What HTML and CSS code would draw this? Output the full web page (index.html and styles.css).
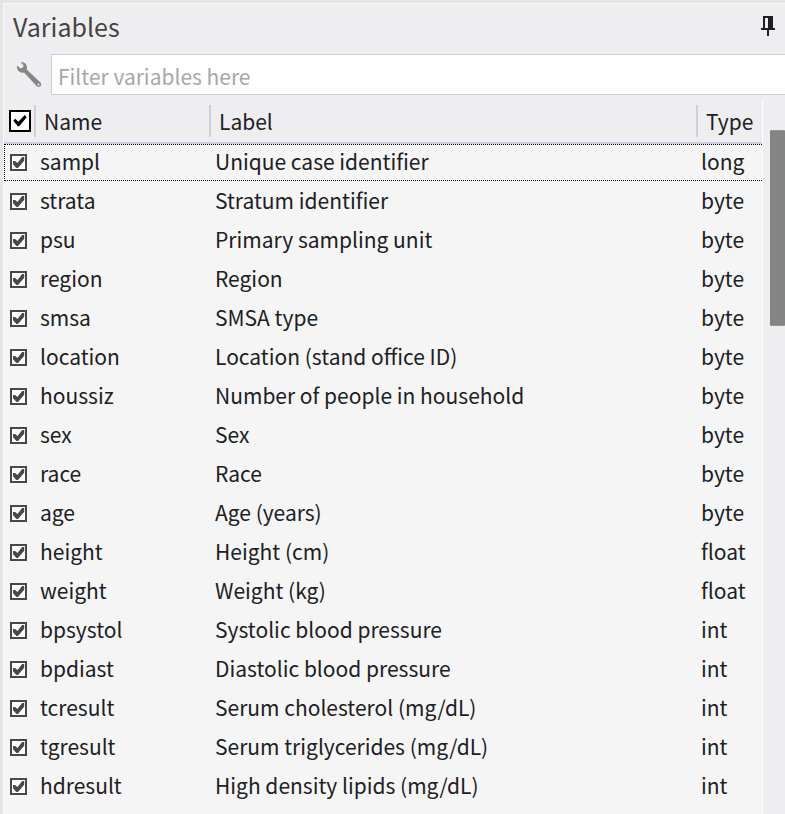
FILE: index.html
```html
<!DOCTYPE html>
<html lang="en">
<head>
  <meta charset="UTF-8">
  <meta name="viewport" content="width=device-width, initial-scale=1.0">
  <title>Variables</title>
  <link rel="stylesheet" href="styles.css">
</head>
<body>
  <section class="panel">
    <header class="titlebar">
      <h1 class="title">Variables</h1>
      <button type="button" class="pin" aria-label="Pin panel">
        <svg width="14" height="20" viewBox="0 0 14 20">
          <path d="M2 0h10v12h2v2H8v6H6v-6H0v-2h2zM4 2v10h3V2z" fill="#1e1e24" fill-rule="evenodd"/>
        </svg>
      </button>
    </header>

    <div class="filter">
      <button type="button" class="tools" aria-label="Filter options">
        <svg width="26" height="26" viewBox="0 0 26 26">
          <path d="M1 3.500L4.500 6.500L7 5.500L7.500 3L4.500 0.500C8 -0.300 11 2 11 5.500L10.700 7.500L24.500 20.500C26.500 23.500 23.500 26 20.800 24.300L8 10.500C4.500 11.500 0.200 8.500 1 3.500Z" fill="#858786"/>
          <circle cx="22.500" cy="22.500" r="1" fill="#eeeef0"/>
        </svg>
      </button>
      <input type="text" class="filter-input" placeholder="Filter variables here" aria-label="Filter variables">
    </div>

    <div class="list">
      <table class="variables">
        <thead>
          <tr>
            <th><input type="checkbox" class="check check-all" id="checkAll" aria-label="Select all variables" checked></th>
            <th>Name</th>
            <th>Label</th>
            <th>Type</th>
          </tr>
        </thead>
        <tbody id="rows"></tbody>
      </table>
      <div class="scrollbar"><div class="thumb"></div></div>
    </div>
  </section>

  <script src="script.js"></script>
</body>
</html>
```

FILE: styles.css
```css
* {
  box-sizing: border-box;
}
body {
  margin: 0;
  font-family: "Noto Sans CJK SC", "Noto Sans", sans-serif;
  font-size: 21px;
  line-height: 32px;
  color: #202024;
  background-color: #e4e4e4;
}
.panel {
  display: flex;
  flex-direction: column;
  min-height: 100vh;
  border-top: 3px solid #e4e4e4;
  border-left: 3px solid #e4e4e4;
  background-color: #eeeef0;
  box-shadow: inset 1px 1px #fafafa;
}
.titlebar {
  display: flex;
  justify-content: space-between;
  align-items: center;
  height: 51px;
  padding: 0 10px 5px;
}
.title {
  margin: 0;
  font-size: 25px;
  font-weight: normal;
  color: #444;
}
.pin, .tools {
  display: flex;
  padding: 0;
  border: none;
  background: none;
  cursor: pointer;
}
.filter {
  display: flex;
  align-items: center;
  padding-left: 13px;
}
.filter-input {
  flex: 1;
  min-width: 0;
  height: 41px;
  margin-left: 9px;
  padding: 2px 6px 0;
  border: 1px solid #c9cdda;
  border-right: none;
  font: inherit;
  color: inherit;
  background-color: #fff;
}
.filter-input::placeholder {
  color: #a6a8a9;
  opacity: 1;
}
.list {
  display: flex;
  flex: 1;
  align-items: stretch;
  padding-top: 5px;
  padding-left: 1px;
}

/* Table of variables */
.variables {
  display: block;
  flex: 1;
  border-right: 1px solid #fff;
  background-color: #f5f5f5;
}
.variables thead {
  display: block;
}
.variables tbody {
  display: grid;
  gap: 2px;
}
.variables tr {
  display: grid;
  grid-template-columns: 30px 175px 1fr 66px;
  align-items: center;
}
.variables th, .variables td {
  padding: 0 0 0 5px;
  font-weight: normal;
  text-align: left;
  white-space: nowrap;
}
.variables thead tr {
  height: 44px;
  border-bottom: 2px solid #cccfdd;
  background-color: #eeeef0;
}
.variables th + th {
  padding-left: 8px;
  border-left: 2px solid #cccfdd;
}
.variables tbody tr {
  height: 37px;
  border: 1px dotted transparent;
  border-right: none;
}
.variables .selected {
  border-color: #000;
}
.variables td {
  line-height: 33px;
  padding-bottom: 2px;
}
.variables td.cell-check {
  padding-bottom: 0;
}

/* Check boxes */
.check {
  appearance: none;
  display: block;
  width: 17px;
  height: 17px;
  margin: 0;
  border: 2px solid #48484a;
  color: #48484a;
  background-color: #fff;
}
.check:checked::before {
  content: "";
  display: block;
  width: 13px;
  height: 13px;
  background-color: currentColor;
  clip-path: polygon(8% 38%, 24% 38%, 42% 54%, 78% 8%, 94% 8%, 94% 36%, 46% 92%, 34% 92%, 8% 64%);
}
.check-all {
  width: 22px;
  height: 22px;
  border-color: #000;
  color: #000;
}
.check-all:checked::before {
  width: 14px;
  height: 14px;
  margin: 2px;
  clip-path: polygon(2% 48%, 16% 34%, 38% 56%, 84% 8%, 98% 24%, 44% 88%, 34% 88%);
}

/* Scrollbar */
.scrollbar {
  width: 22px;
  padding: 30px 0 0 7px;
}
.thumb {
  height: 196px;
  background-color: #838584;
  border-top: 1px dotted #a8a8a8;
  border-bottom: 1px dotted #a8a8a8;
}
```

FILE: script.js
```js
const variables = [
  ['sampl', 'Unique case identifier', 'long'],
  ['strata', 'Stratum identifier', 'byte'],
  ['psu', 'Primary sampling unit', 'byte'],
  ['region', 'Region', 'byte'],
  ['smsa', 'SMSA type', 'byte'],
  ['location', 'Location (stand office ID)', 'byte'],
  ['houssiz', 'Number of people in household', 'byte'],
  ['sex', 'Sex', 'byte'],
  ['race', 'Race', 'byte'],
  ['age', 'Age (years)', 'byte'],
  ['height', 'Height (cm)', 'float'],
  ['weight', 'Weight (kg)', 'float'],
  ['bpsystol', 'Systolic blood pressure', 'int'],
  ['bpdiast', 'Diastolic blood pressure', 'int'],
  ['tcresult', 'Serum cholesterol (mg/dL)', 'int'],
  ['tgresult', 'Serum triglycerides (mg/dL)', 'int'],
  ['hdresult', 'High density lipids (mg/dL)', 'int']
];

const rows = document.getElementById('rows');
const checkAll = document.getElementById('checkAll');

// Build one row per variable
variables.forEach(([name, label, type], index) => {
  const row = document.createElement('tr');
  if (index === 0) row.className = 'selected';
  row.innerHTML = `
    <td class="cell-check"><input type="checkbox" class="check" id="var-${name}" checked></td>
    <td><label for="var-${name}">${name}</label></td>
    <td>${label}</td>
    <td>${type}</td>`;
  rows.appendChild(row);
});

// Tick or clear every row
checkAll.addEventListener('change', () => {
  rows.querySelectorAll('.check').forEach((box) => {
    box.checked = checkAll.checked;
  });
});
```
